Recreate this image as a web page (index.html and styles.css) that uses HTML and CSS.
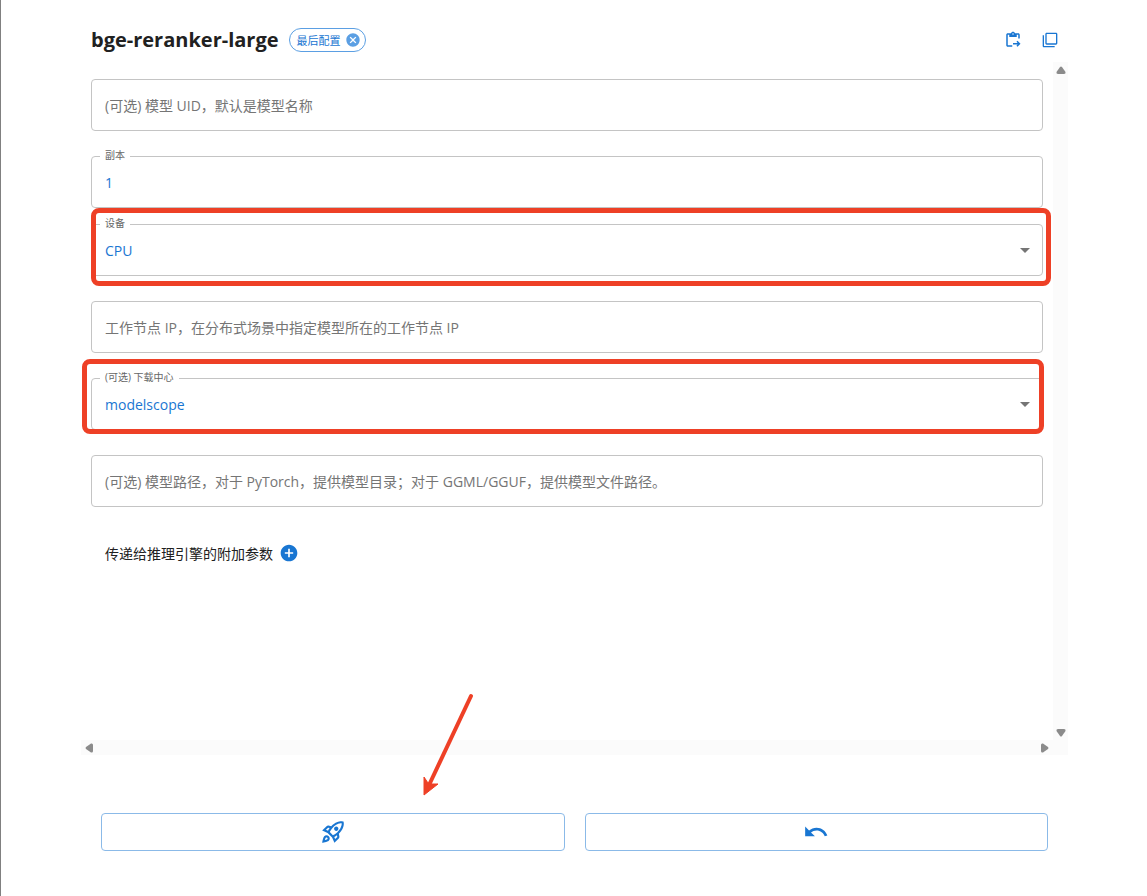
FILE: index.html
```html
<!DOCTYPE html>
<html lang="zh-CN">
<head>
    <meta charset="utf-8">
    <title>bge-reranker-large</title>
    <link rel="stylesheet" href="styles.css">
</head>
<body>
<div class="drawer">
    <!-- 标题 -->
    <header class="header">
        <h1 class="title">bge-reranker-large</h1>
        <span class="chip">
            最后配置
            <button type="button" class="icon-btn chip-close" aria-label="删除">
                <svg width="16" height="16" viewBox="0 0 24 24"><path d="M12 2C6.47 2 2 6.47 2 12s4.47 10 10 10 10-4.47 10-10S17.53 2 12 2zm5 13.59L15.59 17 12 13.41 8.41 17 7 15.59 10.59 12 7 8.41 8.41 7 12 10.59 15.59 7 17 8.41 13.41 12 17 15.59z"/></svg>
            </button>
        </span>
        <div class="tools">
            <button type="button" class="icon-btn" aria-label="粘贴">
                <svg width="18" height="18" viewBox="0 0 24 24"><path d="M5 5h2v3h10V5h2v5h2V5c0-1.1-.9-2-2-2h-4.18C14.4 1.84 13.3 1 12 1S9.6 1.84 9.18 3H5c-1.1 0-2 .9-2 2v14c0 1.1.9 2 2 2h6v-2H5V5zm7-2c.55 0 1 .45 1 1s-.45 1-1 1-1-.45-1-1 .45-1 1-1z"/><path d="M18.01 13l-1.42 1.41 1.58 1.58H12v2h6.17l-1.58 1.59L18.01 21 22 16.99z"/></svg>
            </button>
            <button type="button" class="icon-btn" aria-label="复制">
                <svg width="16" height="16" viewBox="0 0 24 24"><path d="M3 5H1v16c0 1.1.9 2 2 2h16v-2H3V5zm18-4H7c-1.1 0-2 .9-2 2v14c0 1.1.9 2 2 2h14c1.1 0 2-.9 2-2V3c0-1.1-.9-2-2-2zm0 16H7V3h14v14z"/></svg>
            </button>
        </div>
    </header>

    <!-- 表单 -->
    <div class="scroller">
        <form class="form" id="launch">
            <div class="field">
                <input type="text" class="control" aria-label="模型 UID" placeholder="(可选) 模型 UID，默认是模型名称">
            </div>
            <div class="field tight">
                <label class="label" for="replica">副本</label>
                <input type="text" class="control" id="replica" value="1">
            </div>
            <div class="field">
                <label class="label" for="device">设备</label>
                <select class="control" id="device">
                    <option>CPU</option>
                </select>
                <svg class="caret" width="10" height="5" viewBox="0 0 10 5"><path d="M0 0h10L5 5z"/></svg>
                <div class="mark mark-device"></div>
            </div>
            <div class="field">
                <input type="text" class="control" aria-label="工作节点 IP" placeholder="工作节点 IP，在分布式场景中指定模型所在的工作节点 IP">
            </div>
            <div class="field">
                <label class="label" for="hub">(可选) 下载中心</label>
                <select class="control" id="hub">
                    <option>modelscope</option>
                </select>
                <svg class="caret" width="10" height="5" viewBox="0 0 10 5"><path d="M0 0h10L5 5z"/></svg>
                <div class="mark mark-hub"></div>
            </div>
            <div class="field">
                <input type="text" class="control" aria-label="模型路径" placeholder="(可选) 模型路径，对于 PyTorch，提供模型目录；对于 GGML/GGUF，提供模型文件路径。">
            </div>
            <div class="extra">
                <span>传递给推理引擎的附加参数</span>
                <button type="button" class="icon-btn" aria-label="添加">
                    <svg width="20" height="20" viewBox="0 0 24 24"><path d="M12 2C6.48 2 2 6.48 2 12s4.48 10 10 10 10-4.48 10-10S17.52 2 12 2zm5 11h-4v4h-2v-4H7v-2h4V7h2v4h4v2z"/></svg>
                </button>
            </div>
        </form>
        <div class="bar bar-y">
            <svg width="10" height="8" viewBox="0 0 10 8"><path d="M4 1Q5 0 6 1L9.5 6Q10 8 8 8H2Q0 8 .5 6z"/></svg>
            <svg width="10" height="8" viewBox="0 0 10 8"><path d="M4 7Q5 8 6 7L9.5 2Q10 0 8 0H2Q0 0 .5 2z"/></svg>
        </div>
        <div class="bar bar-x">
            <svg width="8" height="10" viewBox="0 0 8 10"><path d="M1 4Q0 5 1 6L6 9.5Q8 10 8 8V2Q8 0 6 .5z"/></svg>
            <svg width="8" height="10" viewBox="0 0 8 10"><path d="M7 4Q8 5 7 6L2 9.5Q0 10 0 8V2Q0 0 2 .5z"/></svg>
        </div>
    </div>

    <!-- 底部按钮 -->
    <footer class="actions">
        <button type="submit" form="launch" class="btn" aria-label="启动">
            <svg width="26" height="26" viewBox="0 0 24 24"><path d="M6 15c-.83 0-1.58.34-2.12.88C2.7 17.06 2 22 2 22s4.94-.7 6.12-1.88C8.66 19.58 9 18.83 9 18c0-1.66-1.34-3-3-3zm.71 3.71c-.28.28-2.17.76-2.17.76s.47-1.88.76-2.17c.17-.19.42-.3.7-.3.55 0 1 .45 1 1 0 .28-.11.53-.29.71zm10.71-5.06c6.36-6.36 4.24-11.31 4.24-11.31S16.71.22 10.35 6.58l-2.49-.5c-.65-.13-1.33.08-1.81.55L2 10.69l5 2.14L11.17 17l2.14 5 4.05-4.05c.47-.47.68-1.15.55-1.81l-.49-2.49zM7.41 10.83l-1.91-.82 1.97-1.97 1.44.29c-.57.83-1.08 1.7-1.5 2.5zm6.58 7.67l-.82-1.91c.8-.42 1.67-.93 2.49-1.5l.29 1.44-1.96 1.97zM16 12.24c-1.32 1.32-3.38 2.4-4.04 2.73l-2.93-2.93c.32-.65 1.4-2.71 2.73-4.04 4.68-4.68 8.23-3.99 8.23-3.99s.69 3.55-3.99 8.23zM15 11c1.1 0 2-.9 2-2s-.9-2-2-2-2 .9-2 2 .9 2 2 2z"/></svg>
        </button>
        <button type="reset" form="launch" class="btn" aria-label="返回">
            <svg width="26" height="26" viewBox="0 0 24 24"><path d="M12.5 8c-2.65 0-5.05.99-6.9 2.6L2 7v9h9l-3.62-3.62c1.39-1.16 3.16-1.88 5.12-1.88 3.54 0 6.55 2.31 7.6 5.5l2.37-.78C21.08 11.03 17.15 8 12.5 8z"/></svg>
        </button>
        <svg class="arrow" width="52" height="104" viewBox="0 0 52 104">
            <path d="M48 4L7 91" stroke="#ee4026" stroke-width="4" stroke-linecap="round"/>
            <path d="M1 103V85l4 6 4 1 6 0L1 103z" fill="#ee4026" stroke="#ee4026" stroke-linejoin="round"/>
        </svg>
    </footer>
</div>
</body>
</html>
```
FILE: styles.css
```css
*{ margin:0; padding:0; box-sizing:border-box;}
body{
    background:#fff;
    color:#212121;
    font-family:"Open Sans","Noto Sans CJK SC",sans-serif;
    font-size:14px;
}
svg{
    display:block;
    fill:currentColor;
}
.drawer{
    display:flex;
    flex-direction:column;
    min-height:100vh;
    padding:0 79px 45px 80px;
    border-left:1px solid #808080;
}
/*标题*/
.header{
    display:flex;
    align-items:center;
    height:62px;
    padding:18px 10px 0;
}
.title{
    font-size:20px;
    font-weight:700;
    line-height:24px;
}
.chip{
    display:flex;
    align-items:center;
    gap:4px;
    height:24px;
    margin-left:10px;
    padding:0 4px 0 7px;
    border:1px solid #5b9fe3;
    border-radius:12px;
    color:#1976d2;
    font-size:11px;
}
.icon-btn{
    border:0;
    background:none;
    color:#1976d2;
    cursor:pointer;
}
.chip-close{
    color:#5b9fe3;
}
.tools{
    display:flex;
    align-items:center;
    gap:20px;
    margin-left:auto;
}
/*滚动区域*/
.scroller{
    flex:1;
    display:grid;
    grid-template-columns:1fr 15px;
    grid-template-rows:1fr 15px;
}
.form{
    padding:17px 10px 0;
}
.bar{
    display:flex;
    align-items:center;
    justify-content:space-between;
    background:#fbfbfb;
    color:#8b8b8b;
}
.bar-y{
    flex-direction:column;
    grid-row:1 / 3;
    grid-column:2;
    padding:4px 0 18px;
}
.bar-x{
    padding:0 4px;
}
/*输入框*/
.field{
    position:relative;
    height:52px;
    margin-bottom:25px;
    border:1px solid #c4c4c4;
    border-radius:4px;
}
.tight{
    margin-bottom:16px;
}
.control{
    display:block;
    width:100%;
    height:100%;
    padding:0 13px;
    border:0;
    outline:0;
    background:none;
    color:#1976d2;
    font:inherit;
    appearance:none;
}
.control::placeholder{
    color:#757575;
    opacity:1;
}
.label{
    position:absolute;
    top:-8px;
    left:8px;
    padding:0 5px;
    background:#fff;
    color:#666;
    font-size:10px;
    line-height:12px;
}
.caret{
    position:absolute;
    top:23px;
    right:12px;
    color:#757575;
    pointer-events:none;
}
/*红色标注*/
.mark{
    position:absolute;
    border:5px solid #ee4026;
    border-radius:8px;
    pointer-events:none;
}
.mark-device{
    top:-17px;
    right:-9px;
    bottom:-11px;
    left:-1px;
}
.mark-hub{
    top:-20px;
    right:-2px;
    bottom:-5px;
    left:-10px;
}
.extra{
    display:flex;
    align-items:center;
    gap:6px;
    padding:11px 14px;
}
/*底部按钮*/
.actions{
    position:relative;
    display:flex;
    gap:20px;
    margin-top:58px;
    padding:0 20px;
}
.btn{
    flex:1;
    display:flex;
    align-items:center;
    justify-content:center;
    height:38px;
    border:1px solid #8bbae8;
    border-radius:4px;
    background:#fff;
    color:#1976d2;
    cursor:pointer;
}
.arrow{
    position:absolute;
    top:-121px;
    left:342px;
    fill:none;
}
```
